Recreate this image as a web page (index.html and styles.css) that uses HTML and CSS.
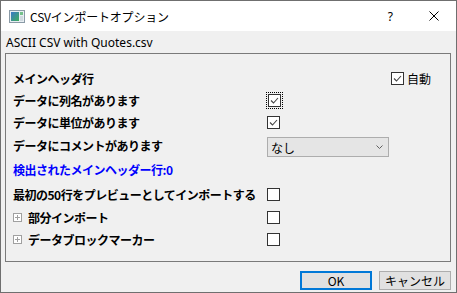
FILE: index.html
```html
<!DOCTYPE html>
<html lang="ja">
<head>
<meta charset="utf-8">
<title>CSVインポートオプション</title>
<link rel="stylesheet" href="styles.css">
</head>
<body>
<div class="window">
  <div class="titlebar">
    <svg class="appicon" width="16" height="13" viewBox="0 0 16 13">
      <defs>
        <linearGradient id="g1" x1="0" y1="0" x2="1" y2="1">
          <stop offset="0" stop-color="#3a78c8"/>
          <stop offset="1" stop-color="#3fae5a"/>
        </linearGradient>
      </defs>
      <rect x="0.5" y="0.5" width="15" height="12" fill="#e8eef2" stroke="#8a9aa6"/>
      <rect x="2" y="2" width="8" height="9" fill="url(#g1)"/>
      <rect x="11" y="2" width="3" height="3" fill="#74c08a"/>
      <rect x="11" y="6" width="3" height="5" fill="#cfd9df"/>
    </svg>
    <span class="title">CSVインポートオプション</span>
    <span class="help">?</span>
    <svg class="close" width="10" height="10" viewBox="0 0 10 10">
      <path d="M0.5 0.5 L9.5 9.5 M9.5 0.5 L0.5 9.5" stroke="#000" stroke-width="1"/>
    </svg>
  </div>
  <div class="content">
    <div class="file">ASCII CSV with Quotes.csv</div>
    <div class="panel">
      <div class="row r1">
        <span class="label">メインヘッダ行</span>
        <span class="ctl auto"><span class="cb checked"><svg width="11" height="11" viewBox="0 0 11 11"><path d="M2 5.5 L4.5 8 L9 3" fill="none" stroke="#444" stroke-width="1.1"/></svg></span><span class="autotext">自動</span></span>
      </div>
      <div class="row r2">
        <span class="label">データに列名があります</span>
        <span class="ctl"><span class="focus"><span class="cb checked"><svg width="11" height="11" viewBox="0 0 11 11"><path d="M2 5.5 L4.5 8 L9 3" fill="none" stroke="#444" stroke-width="1.1"/></svg></span></span></span>
      </div>
      <div class="row r3">
        <span class="label">データに単位があります</span>
        <span class="ctl"><span class="cb checked"><svg width="11" height="11" viewBox="0 0 11 11"><path d="M2 5.5 L4.5 8 L9 3" fill="none" stroke="#444" stroke-width="1.1"/></svg></span></span>
      </div>
      <div class="row r4">
        <span class="label">データにコメントがあります</span>
        <span class="ctl"><span class="combo"><span class="combotext">なし</span><svg width="7" height="4" viewBox="0 0 7 4"><path d="M0.5 0.5 L3.5 3.5 L6.5 0.5" fill="none" stroke="#606060" stroke-width="1"/></svg></span></span>
      </div>
      <div class="row r5">
        <span class="label blue">検出されたメインヘッダー行:0</span>
      </div>
      <div class="row r6">
        <span class="label">最初の50行をプレビューとしてインポートする</span>
        <span class="ctl"><span class="cb"></span></span>
      </div>
      <div class="row r7">
        <span class="label"><span class="exp"><svg width="9" height="9" viewBox="0 0 9 9"><rect x="0.5" y="0.5" width="8" height="8" fill="#fff" stroke="#a0a0a0"/><path d="M2 4.5 H7 M4.5 2 V7" stroke="#a0a0a0" stroke-width="1"/></svg></span>部分インポート</span>
        <span class="ctl"><span class="cb"></span></span>
      </div>
      <div class="row r8">
        <span class="label"><span class="exp"><svg width="9" height="9" viewBox="0 0 9 9"><rect x="0.5" y="0.5" width="8" height="8" fill="#fff" stroke="#a0a0a0"/><path d="M2 4.5 H7 M4.5 2 V7" stroke="#a0a0a0" stroke-width="1"/></svg></span>データブロックマーカー</span>
        <span class="ctl"><span class="cb"></span></span>
      </div>
    </div>
    <div class="buttons">
      <button class="btn default">OK</button>
      <button class="btn">キャンセル</button>
    </div>
  </div>
</div>
</body>
</html>
```
FILE: styles.css
```css
html, body {
  margin: 0;
  padding: 0;
  background: #f0f0f0;
}
.window {
  width: 457px;
  height: 293px;
  box-sizing: border-box;
  border: 1px solid #6f6f6f;
  background: #f0f0f0;
  display: flex;
  flex-direction: column;
  font-family: "Noto Sans CJK JP", "Noto Sans", sans-serif;
  font-size: 12px;
  color: #000;
}
.titlebar {
  height: 30px;
  background: #fff;
  display: flex;
  align-items: center;
}
.appicon {
  margin-left: 8px;
  margin-top: 1px;
}
.title {
  margin-left: 5px;
  font-size: 12px;
  letter-spacing: -0.2px;
  flex: 1;
}
.help {
  font-family: "Noto Sans", sans-serif;
  font-size: 12px;
  margin-right: 36px;
}
.close {
  margin-right: 17px;
}
.content {
  flex: 1;
  display: flex;
  flex-direction: column;
}
.file {
  height: 22px;
  display: flex;
  align-items: center;
  padding-left: 5px;
  font-family: "Noto Sans", sans-serif;
  font-size: 12px;
}
.panel {
  margin: 0 5px 0 4px;
  height: 209px;
  box-sizing: border-box;
  border: 1px solid #7a7a7a;
  padding: 13px 0 0 7px;
  display: flex;
  flex-direction: column;
}
.row {
  display: grid;
  grid-template-columns: 254px 1fr;
  align-items: center;
}
.r1 { height: 22px; }
.r2 { height: 22px; }
.r3 { height: 23px; }
.r4 { height: 23px; }
.r5 { height: 25px; }
.r6 { height: 24px; }
.r7 { height: 22px; }
.r8 { height: 22px; }
.label {
  font-weight: bold;
  font-size: 12px;
  letter-spacing: -0.5px;
  white-space: nowrap;
  display: flex;
  align-items: center;
}
.blue {
  color: #0000ff;
}
.ctl {
  display: flex;
  align-items: center;
}
.auto {
  margin-left: 124px;
}
.autotext {
  margin-left: 3px;
  font-size: 12px;
}
.cb {
  width: 13px;
  height: 13px;
  box-sizing: border-box;
  border: 1px solid #333;
  background: #fff;
  display: flex;
  align-items: center;
  justify-content: center;
}
.focus {
  display: flex;
  padding: 1px;
  outline: 1px dotted #000;
}
.combo {
  width: 122px;
  height: 20px;
  box-sizing: border-box;
  border: 1px solid #adadad;
  background: #e5e5e5;
  display: flex;
  align-items: center;
  justify-content: space-between;
  padding: 0 5px 0 3px;
  margin-top: 3px;
}
.combotext {
  font-size: 12px;
  color: #000;
}
.exp {
  display: flex;
  margin-right: 6px;
}
.buttons {
  display: flex;
  justify-content: flex-end;
  gap: 7px;
  padding: 9px 5px 0 0;
}
.btn {
  width: 72px;
  height: 19px;
  box-sizing: border-box;
  border: 1px solid #adadad;
  background: #e1e1e1;
  font-family: "Noto Sans CJK JP", "Noto Sans", sans-serif;
  font-size: 12px;
  padding: 0;
  margin: 0;
  line-height: 15px;
  color: #000;
}
.default {
  border: 2px solid #0078d7;
  line-height: 13px;
}
```
